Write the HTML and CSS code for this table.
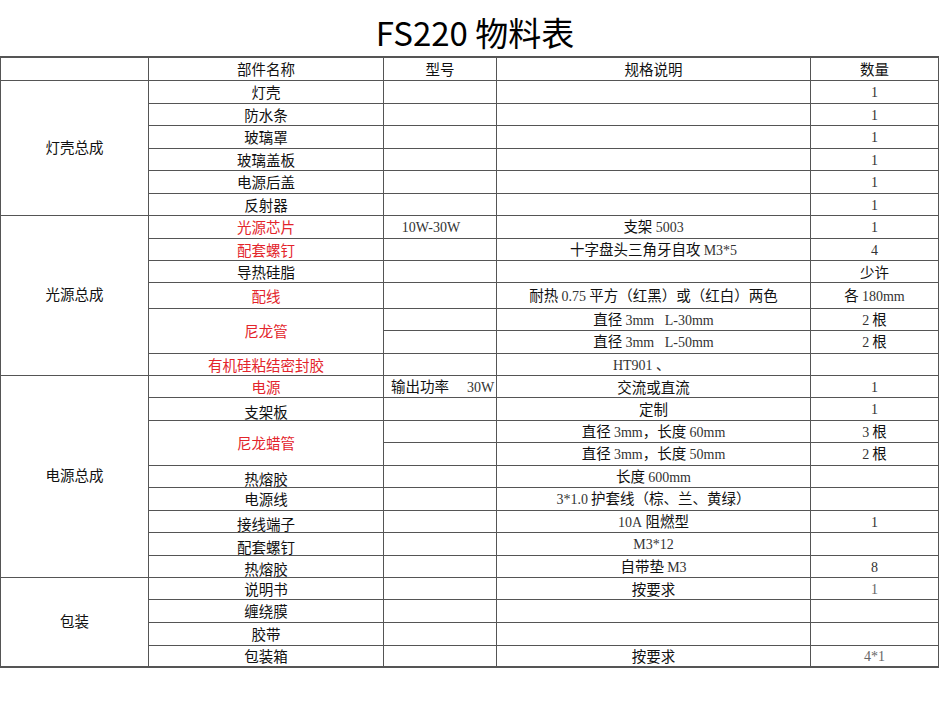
FILE: index.html
```html
<!DOCTYPE html>
<html lang="zh-CN">
<head>
<meta charset="utf-8">
<title>FS220 物料表</title>
<link rel="stylesheet" href="styles.css">
</head>
<body>
<h1 class="title">FS220 物料表</h1>
<table class="bom">
  <colgroup>
    <col class="c-group">
    <col class="c-name">
    <col class="c-model">
    <col class="c-spec">
    <col class="c-qty">
  </colgroup>
  <thead>
    <tr class="h23">
      <th></th>
      <th>部件名称</th>
      <th>型号</th>
      <th>规格说明</th>
      <th>数量</th>
    </tr>
  </thead>
  <tbody>
    <tr class="h23">
      <td class="group" rowspan="6">灯壳总成</td>
      <td>灯壳</td><td></td><td></td><td><span class="n">1</span></td>
    </tr>
    <tr class="h22"><td>防水条</td><td></td><td></td><td><span class="n">1</span></td></tr>
    <tr class="h23"><td>玻璃罩</td><td></td><td></td><td><span class="n">1</span></td></tr>
    <tr class="h22"><td>玻璃盖板</td><td></td><td></td><td><span class="n">1</span></td></tr>
    <tr class="h23"><td>电源后盖</td><td></td><td></td><td><span class="n">1</span></td></tr>
    <tr class="h22"><td>反射器</td><td></td><td></td><td><span class="n">1</span></td></tr>

    <tr class="h23 sect">
      <td class="group" rowspan="7">光源总成</td>
      <td class="red">光源芯片</td>
      <td class="model-c"><span class="n">10W-30W</span></td>
      <td>支架 <span class="n">5003</span></td>
      <td><span class="n">1</span></td>
    </tr>
    <tr class="h22"><td class="red">配套螺钉</td><td></td><td>十字盘头三角牙自攻 <span class="n">M3*5</span></td><td><span class="n">4</span></td></tr>
    <tr class="h22"><td>导热硅脂</td><td></td><td></td><td>少许</td></tr>
    <tr class="h26"><td class="red">配线</td><td></td><td>耐热 <span class="n">0.75</span> 平方（红黑）或（红白）两色</td><td>各 <span class="n">180mm</span></td></tr>
    <tr class="h22"><td class="red" rowspan="2">尼龙管</td><td></td><td>直径 <span class="n">3mm&nbsp;&nbsp;&nbsp;L-30mm</span></td><td><span class="n">2</span> 根</td></tr>
    <tr class="h23"><td></td><td>直径 <span class="n">3mm&nbsp;&nbsp;&nbsp;L-50mm</span></td><td><span class="n">2</span> 根</td></tr>
    <tr class="h22"><td class="red">有机硅粘结密封胶</td><td></td><td class="spec-l"><span class="n">HT901 、</span></td><td></td></tr>

    <tr class="h22 sect">
      <td class="group" rowspan="9">电源总成</td>
      <td class="red">电源</td>
      <td class="model-l">输出功率<span class="n gap">30W</span></td>
      <td>交流或直流</td>
      <td><span class="n">1</span></td>
    </tr>
    <tr class="h23"><td class="low">支架板</td><td></td><td>定制</td><td><span class="n">1</span></td></tr>
    <tr class="h22"><td class="red" rowspan="2">尼龙蜡管</td><td></td><td>直径 <span class="n">3mm</span>，长度 <span class="n">60mm</span></td><td><span class="n">3</span> 根</td></tr>
    <tr class="h23"><td></td><td>直径 <span class="n">3mm</span>，长度 <span class="n">50mm</span></td><td><span class="n">2</span> 根</td></tr>
    <tr class="h22"><td class="low">热熔胶</td><td></td><td>长度 <span class="n">600mm</span></td><td></td></tr>
    <tr class="h23"><td>电源线</td><td></td><td><span class="n">3*1.0</span> 护套线（棕、兰、黄绿）</td><td></td></tr>
    <tr class="h22"><td class="low">接线端子</td><td></td><td><span class="n">10A</span> 阻燃型</td><td><span class="n">1</span></td></tr>
    <tr class="h23"><td class="low">配套螺钉</td><td></td><td><span class="n">M3*12</span></td><td></td></tr>
    <tr class="h22"><td class="low">热熔胶</td><td></td><td>自带垫 <span class="n">M3</span></td><td><span class="n">8</span></td></tr>

    <tr class="h22 sect">
      <td class="group" rowspan="4">包装</td>
      <td>说明书</td><td></td><td>按要求</td><td><span class="n light">1</span></td>
    </tr>
    <tr class="h23"><td>缠绕膜</td><td></td><td></td><td></td></tr>
    <tr class="h23"><td>胶带</td><td></td><td></td><td></td></tr>
    <tr class="h22 last"><td>包装箱</td><td></td><td>按要求</td><td><span class="n light">4*1</span></td></tr>
  </tbody>
</table>
</body>
</html>
```
FILE: styles.css
```css
html, body {
  margin: 0;
  padding: 0;
  background: #ffffff;
}

body {
  font-family: "Noto Sans CJK SC", "Noto Sans", sans-serif;
  color: #111111;
}

.title {
  margin: 0;
  height: 56px;
  box-sizing: border-box;
  padding-top: 9px;
  font-size: 33px;
  line-height: 46px;
  font-weight: 400;
  text-align: center;
  color: #000000;
}

.bom {
  border-collapse: collapse;
  table-layout: fixed;
  width: 938px;
  margin: 0;
}

.c-group { width: 148px; }
.c-name  { width: 235px; }
.c-model { width: 113px; }
.c-spec  { width: 314px; }
.c-qty   { width: 128px; }

.bom th,
.bom td {
  border: 1px solid #555555;
  padding: 0;
  text-align: center;
  vertical-align: middle;
  font-size: 14.5px;
  line-height: 17px;
  font-weight: 400;
  white-space: nowrap;
  color: #111111;
}

.bom td.group {
  padding-bottom: 3px;
}

.bom thead th {
  border-top: 2px solid #555555;
}

.bom tr.last td,
.bom td.group[rowspan="4"] {
  border-bottom: 2px solid #555555;
}

.h22 { height: 22px; }
.h23 { height: 23px; }
.h26 { height: 26px; }

.bom td.red {
  color: #e3242b;
}

.bom td.low {
  vertical-align: bottom;
}

.bom td.model-l {
  text-align: left;
  padding-left: 7px;
}

.bom td.model-c {
  padding-right: 18px;
}

.bom td.spec-l {
  padding-right: 24px;
}

.n {
  font-family: "Liberation Serif", serif;
  font-size: 14px;
  color: #333333;
}

.n.gap {
  margin-left: 18px;
}

.n.light {
  color: #666666;
}
```
